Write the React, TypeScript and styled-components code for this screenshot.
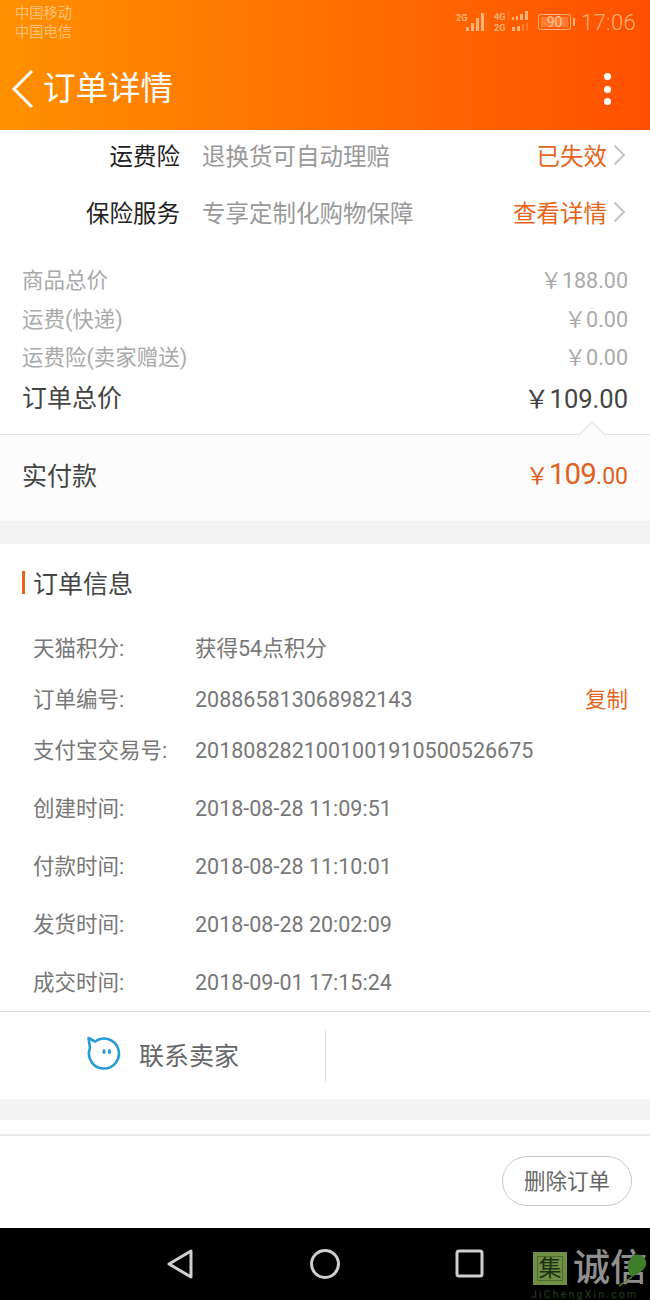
import * as React from 'react';
import styled, { createGlobalStyle } from 'styled-components';

const GlobalStyle = createGlobalStyle`
    html, body {
        margin: 0;
        padding: 0;
        background: #fff;
    }
    body {
        font-family: Roboto, "Noto Sans CJK SC", "Liberation Sans", sans-serif;
    }
`;

const Page = styled.div`
    width: 650px;
    height: 1300px;
    display: flex;
    flex-direction: column;
    overflow: hidden;
`;

const Header = styled.div`
    height: 130px;
    flex: none;
    background: linear-gradient(90deg, #ff9000 0%, #ff5000 100%);
    display: flex;
    flex-direction: column;
`;

const StatusBar = styled.div`
    height: 44px;
    padding: 4px 14px 0 15px;
    display: flex;
    justify-content: space-between;
    align-items: flex-start;
`;

const Carriers = styled.div`
    font-size: 14.25px;
    line-height: 19px;
    color: #ffc27a;
`;

const StatusRight = styled.div`
    display: flex;
    align-items: center;
    height: 36px;
    color: #ffb27a;
`;

const Clock = styled.span`
    font-size: 22px;
    font-weight: 300;
    margin-left: 5px;
    letter-spacing: 0.3px;
`;

const NavBar = styled.div`
    flex: 1;
    display: flex;
    align-items: center;
    padding: 0 39px 0 11px;
`;

const NavTitle = styled.div`
    flex: 1;
    margin-left: 8px;
    font-size: 32.5px;
    line-height: 44px;
    color: #fff;
`;

const Dots = styled.div`
    display: flex;
    flex-direction: column;
    gap: 5.5px;
    & > i {
        display: block;
        width: 7px;
        height: 7px;
        border-radius: 50%;
        background: #fff;
    }
`;

const ServiceList = styled.div`
    height: 113px;
    flex: none;
    display: flex;
    flex-direction: column;
    gap: 7px;
`;

const ServiceRow = styled.div`
    height: 50px;
    display: flex;
    align-items: center;
    padding-right: 24px;
`;

const ServiceName = styled.div`
    width: 180px;
    text-align: right;
    font-size: 23.5px;
    color: #222;
`;

const ServiceDesc = styled.div`
    flex: 1;
    margin-left: 22px;
    font-size: 23.5px;
    color: #999;
`;

const ServiceState = styled.div`
    font-size: 23.5px;
    color: #e8641b;
`;

const Chevron = styled.svg`
    margin-left: 6px;
`;

const Prices = styled.div`
    height: 192px;
    flex: none;
    padding: 16px 22px 0;
    box-sizing: border-box;
    border-bottom: 1px solid #e2e2e2;
    position: relative;
`;

const PriceRow = styled.div`
    height: 38.7px;
    display: flex;
    justify-content: space-between;
    align-items: center;
    font-size: 21.5px;
    color: #aaa;
`;

const TotalRow = styled(PriceRow)`
    height: 42px;
    font-size: 25px;
    color: #444;
`;

const TotalAmount = styled.span`
    font-size: 25.5px;
`;

const Notch = styled.div`
    position: absolute;
    right: 49px;
    bottom: -9px;
    width: 17px;
    height: 17px;
    background: #fcfcfc;
    border-top: 1px solid #e2e2e2;
    border-left: 1px solid #e2e2e2;
    transform: rotate(45deg);
`;

const PaidRow = styled.div`
    height: 86px;
    flex: none;
    box-sizing: border-box;
    background: #fcfcfc;
    padding: 0 22px 9px;
    display: flex;
    justify-content: space-between;
    align-items: center;
    font-size: 25px;
    color: #444;
`;

const PaidAmount = styled.div`
    color: #e0601f;
    display: flex;
    align-items: baseline;
    font-size: 23px;
    & > b {
        font-weight: 400;
        font-size: 29.5px;
        letter-spacing: -0.8px;
    }
`;

const Gap = styled.div<{ $h: number }>`
    height: ${(p) => p.$h}px;
    flex: none;
    background: #f3f3f3;
`;

const InfoSection = styled.div`
    height: 468px;
    flex: none;
    box-sizing: border-box;
    border-bottom: 1px solid #d8d8d8;
`;

const SectionTitle = styled.div`
    margin: 27px 0 0 22px;
    height: 23px;
    padding-left: 8px;
    border-left: 3px solid #e8641b;
    font-size: 25px;
    line-height: 27px;
    color: #444;
`;

const InfoRow = styled.div<{ $h: number }>`
    height: ${(p) => p.$h}px;
    line-height: ${(p) => p.$h}px;
    display: flex;
    align-items: baseline;
    padding: 0 22px 0 33px;
    font-size: 21.5px;
    color: #777;
`;

const InfoLabel = styled.div`
    width: 162px;
    flex: none;
`;

const InfoValue = styled.div`
    flex: 1;
`;

const CopyLink = styled.div`
    color: #e8641b;
`;

const InfoList = styled.div`
    margin-top: 29px;
`;

const TimeList = styled.div`
    margin-top: 3.5px;
`;

const ContactBar = styled.div`
    height: 87px;
    flex: none;
    display: flex;
    align-items: center;
`;

const ContactCell = styled.div`
    width: 326px;
    height: 52px;
    box-sizing: border-box;
    border-right: 1px solid #e0e0e0;
    display: flex;
    align-items: center;
    padding: 0 0 3px 86px;
    gap: 17px;
    font-size: 25px;
    color: #666;
`;

const ActionBar = styled.div`
    height: 94px;
    flex: none;
    box-sizing: border-box;
    margin-top: 14px;
    border-top: 2px solid #eaeaea;
    padding: 20px 18px 0 0;
    display: flex;
    justify-content: flex-end;
    align-items: flex-start;
`;

const OutlineButton = styled.div`
    width: 130px;
    height: 50px;
    box-sizing: border-box;
    padding-bottom: 3px;
    border: 1px solid #c8c8c8;
    border-radius: 25px;
    display: flex;
    align-items: center;
    justify-content: center;
    font-size: 21.5px;
    color: #666;
`;

const SystemNav = styled.div`
    flex: 1;
    background: #000;
    display: flex;
    align-items: flex-start;
    padding: 20px 0 0 165px;
    gap: 112px;
    position: relative;
`;

const Watermark = styled.div`
    position: absolute;
    left: 533px;
    top: 24px;
    width: 117px;
    height: 48px;
    display: flex;
    align-items: flex-start;
    gap: 6px;
`;

const Stamp = styled.div`
    width: 34px;
    height: 33px;
    flex: none;
    box-sizing: border-box;
    background: #6f8f45;
    border: 3px solid #6f8f45;
    outline: 1px solid #4b6a2c;
    outline-offset: -5px;
    color: #1f2f12;
    font-size: 23px;
    line-height: 27px;
    text-align: center;
`;

const BrandName = styled.div`
    height: 34px;
    color: #8f8f8f;
    font-size: 37px;
    line-height: 34px;
    font-weight: 500;
    white-space: nowrap;
`;

const WatermarkDomain = styled.div`
    position: absolute;
    left: -2px;
    top: 37px;
    font-size: 10.5px;
    line-height: 12px;
    letter-spacing: 2.2px;
    color: #24401a;
    white-space: nowrap;
`;

const Leaf = styled.svg`
    position: absolute;
    left: 84px;
    top: 0;
`;

const SignalIcons = () => (
    <svg width="84" height="30" viewBox="0 0 84 30">
        <g fontSize="9" fontWeight="700" fill="#ffb27a" fontFamily="Roboto">
            <text x="2" y="14">2G</text>
            <text x="40" y="13">4G</text>
            <text x="40" y="24">2G</text>
        </g>
        <g fill="#ffb27a">
            <rect x="12" y="20" width="3" height="4" />
            <rect x="17" y="16" width="3" height="8" />
            <rect x="22" y="11" width="3" height="13" />
            <rect x="27" y="6" width="3" height="18" />
            <rect x="58" y="10" width="2" height="3" />
            <rect x="62" y="9" width="2" height="4" />
            <rect x="66" y="7" width="3" height="6" />
            <rect x="71" y="4" width="3" height="9" />
            <rect x="58" y="20" width="3" height="4" />
            <rect x="63" y="19" width="3" height="5" />
        </g>
        <g fill="#ffb27a" opacity="0.35">
            <rect x="32" y="6" width="1" height="18" />
            <rect x="54" y="4" width="1" height="9" />
            <rect x="68" y="17" width="2" height="7" />
            <rect x="72" y="16" width="2" height="8" />
        </g>
    </svg>
);

const Battery = () => (
    <svg width="38" height="20" viewBox="0 0 38 20">
        <rect x="0.5" y="2.5" width="32" height="15" rx="2" fill="none" stroke="#ffb27a" />
        <rect x="3" y="5" width="27" height="10" fill="#ffb27a" opacity="0.4" />
        <rect x="35" y="6" width="2" height="8" fill="#ffb27a" />
        <text x="16.5" y="15" fontSize="14" textAnchor="middle" fill="#ffc49a" fontFamily="Roboto">90</text>
    </svg>
);

const ArrowRight = () => (
    <Chevron width="13" height="22" viewBox="0 0 13 22">
        <path d="M1.5 1.5 L11 11 L1.5 20.5" fill="none" stroke="#c4c4c4" strokeWidth="2" />
    </Chevron>
);

const SmileIcon = () => (
    <svg width="36" height="36" viewBox="0 0 36 36">
        <path d="M9 5.5 A15 15 0 1 1 4 12 L2.5 2 Z" fill="none" stroke="#2a9bd3" strokeWidth="2.6" strokeLinejoin="round" />
        <ellipse cx="18" cy="15.5" rx="1.6" ry="2.5" fill="#2a9bd3" />
        <ellipse cx="23.5" cy="15.5" rx="1.6" ry="2.5" fill="#2a9bd3" />
    </svg>
);

const priceRows = [
    { label: '商品总价', value: '￥188.00' },
    { label: '运费(快递)', value: '￥0.00' },
    { label: '运费险(卖家赠送)', value: '￥0.00' },
];

const infoRows = [
    { label: '天猫积分:', value: '获得54点积分' },
    { label: '订单编号:', value: '208865813068982143', copy: true },
    { label: '支付宝交易号:', value: '2018082821001001910500526675' },
];

const timeRows = [
    { label: '创建时间:', value: '2018-08-28 11:09:51' },
    { label: '付款时间:', value: '2018-08-28 11:10:01' },
    { label: '发货时间:', value: '2018-08-28 20:02:09' },
    { label: '成交时间:', value: '2018-09-01 17:15:24' },
];

export default function App() {
    return (
        <Page>
            <GlobalStyle />
            <Header>
                <StatusBar>
                    <Carriers>
                        中国移动
                        <br />
                        中国电信
                    </Carriers>
                    <StatusRight>
                        <SignalIcons />
                        <Battery />
                        <Clock>17:06</Clock>
                    </StatusRight>
                </StatusBar>
                <NavBar>
                    <svg width="24" height="40" viewBox="0 0 24 40">
                        <path d="M21 2 L3 20 L21 38" fill="none" stroke="#fff" strokeWidth="3" />
                    </svg>
                    <NavTitle>订单详情</NavTitle>
                    <Dots>
                        <i />
                        <i />
                        <i />
                    </Dots>
                </NavBar>
            </Header>

            <ServiceList>
                <ServiceRow>
                    <ServiceName>运费险</ServiceName>
                    <ServiceDesc>退换货可自动理赔</ServiceDesc>
                    <ServiceState>已失效</ServiceState>
                    <ArrowRight />
                </ServiceRow>
                <ServiceRow>
                    <ServiceName>保险服务</ServiceName>
                    <ServiceDesc>专享定制化购物保障</ServiceDesc>
                    <ServiceState>查看详情</ServiceState>
                    <ArrowRight />
                </ServiceRow>
            </ServiceList>

            <Prices>
                {priceRows.map((row) => (
                    <PriceRow key={row.label}>
                        <span>{row.label}</span>
                        <span>{row.value}</span>
                    </PriceRow>
                ))}
                <TotalRow>
                    <span>订单总价</span>
                    <TotalAmount>￥109.00</TotalAmount>
                </TotalRow>
                <Notch />
            </Prices>

            <PaidRow>
                <span>实付款</span>
                <PaidAmount>
                    ￥<b>109</b>.00
                </PaidAmount>
            </PaidRow>

            <Gap $h={23} />

            <InfoSection>
                <SectionTitle>订单信息</SectionTitle>
                <InfoList>
                    {infoRows.map((row) => (
                        <InfoRow key={row.label} $h={51}>
                            <InfoLabel>{row.label}</InfoLabel>
                            <InfoValue>{row.value}</InfoValue>
                            {row.copy && <CopyLink>复制</CopyLink>}
                        </InfoRow>
                    ))}
                </InfoList>
                <TimeList>
                    {timeRows.map((row) => (
                        <InfoRow key={row.label} $h={58}>
                            <InfoLabel>{row.label}</InfoLabel>
                            <InfoValue>{row.value}</InfoValue>
                        </InfoRow>
                    ))}
                </TimeList>
            </InfoSection>

            <ContactBar>
                <ContactCell>
                    <SmileIcon />
                    联系卖家
                </ContactCell>
            </ContactBar>

            <Gap $h={21} />

            <ActionBar>
                <OutlineButton>删除订单</OutlineButton>
            </ActionBar>

            <SystemNav>
                <svg width="32" height="32" viewBox="0 0 32 32">
                    <path d="M26 3 L4 16 L26 29 Z" fill="none" stroke="#cfcfcf" strokeWidth="3" strokeLinejoin="round" />
                </svg>
                <svg width="32" height="32" viewBox="0 0 32 32">
                    <circle cx="16" cy="16" r="13.5" fill="none" stroke="#cfcfcf" strokeWidth="3" />
                </svg>
                <svg width="32" height="32" viewBox="0 0 32 32">
                    <rect x="4" y="3" width="25" height="25" rx="2" fill="none" stroke="#cfcfcf" strokeWidth="3" />
                </svg>
                <Watermark>
                    <Stamp>集</Stamp>
                    <BrandName>诚信</BrandName>
                    <Leaf width="33" height="36" viewBox="0 0 33 36">
                        <path d="M14 6 C18 -1 31 3 29 13 C28 18 22 21 15 25 C10 20 9 11 14 6 Z" fill="#3f7d28" />
                        <path d="M15 25 L2 34" stroke="#5c8a3a" strokeWidth="1.5" fill="none" />
                    </Leaf>
                    <WatermarkDomain>JiChengXin.com</WatermarkDomain>
                </Watermark>
            </SystemNav>
        </Page>
    );
}
